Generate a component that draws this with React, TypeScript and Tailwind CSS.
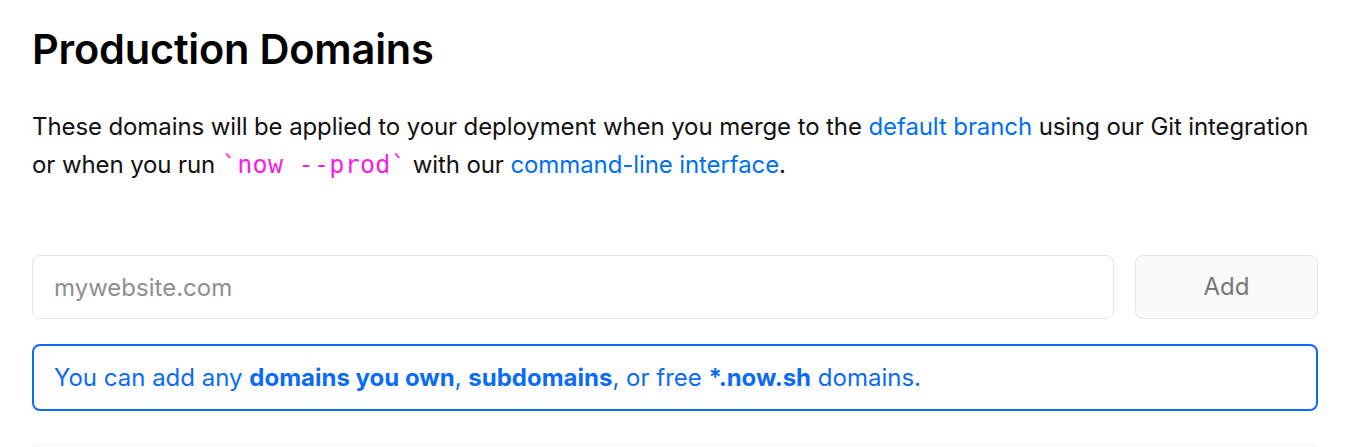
export default function App() {
  return (
    <main className="min-h-screen bg-white px-8 pt-[25px] font-['Inter','Noto_Sans',sans-serif] text-black">
      <h1 className="text-[41.5px] font-semibold leading-[48px] tracking-[-0.2px]">
        Production Domains
      </h1>

      <p className="mt-[35px] text-[24px] leading-[38px] tracking-[-0.1px] text-[#111]">
        These domains will be applied to your deployment when you merge to the{" "}
        <a className="text-[#0070f3]" href="#">
          default branch
        </a>{" "}
        using our Git integration or when you run{" "}
        <code className="font-['DejaVu_Sans_Mono','Liberation_Mono',monospace] text-[25px] tracking-[0.3px] text-[#f81ce5]">
          `now --prod`
        </code>{" "}
        with our{" "}
        <a className="text-[#0070f3]" href="#">
          command-line interface
        </a>
        .
      </p>

      <form className="mt-[71px] flex gap-[21px]">
        <input
          type="text"
          placeholder="mywebsite.com"
          className="h-16 flex-1 rounded-lg border border-[#e5e5e5] px-[21px] text-[24px] outline-none placeholder:text-[#8f8f8f]"
        />
        <button
          type="button"
          className="h-16 w-[183px] rounded-lg border border-[#e5e5e5] bg-[#fafafa] text-[24px] text-[#777]"
        >
          Add
        </button>
      </form>

      <div className="mt-[25px] flex h-[67px] items-center rounded-lg border-2 border-[#0b6bf5] px-5 text-[24px] text-[#0b6bf5]">
        <span>
          You can add any <b className="font-bold">domains you own</b>,{" "}
          <b className="font-bold">subdomains</b>, or free{" "}
          <b className="font-bold">*.now.sh</b> domains.
        </span>
      </div>

      <div className="mt-8 h-10 rounded-t-lg bg-[#fafafa]" />
    </main>
  );
}
